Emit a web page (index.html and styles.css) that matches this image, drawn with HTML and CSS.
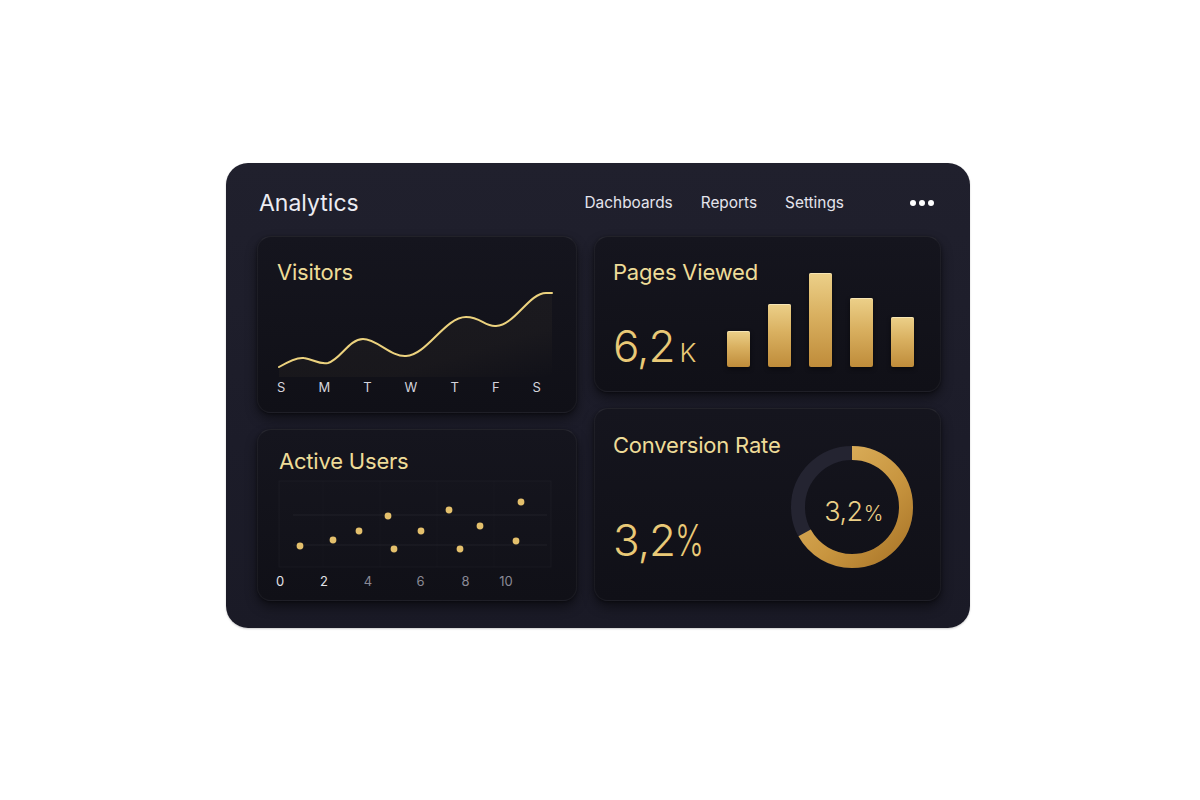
FILE: index.html
```html
<!DOCTYPE html>
<html lang="en">
<head>
<meta charset="utf-8">
<title>Analytics</title>
<link rel="stylesheet" href="styles.css">
</head>
<body>
<div class="panel">
  <header class="header">
    <h1 class="brand">Analytics</h1>
    <nav class="nav">
      <a class="nav-item">Dachboards</a>
      <a class="nav-item">Reports</a>
      <a class="nav-item">Settings</a>
    </nav>
    <div class="more"><span></span><span></span><span></span></div>
  </header>
  <div class="columns">
    <div class="col col-left">
      <section class="card visitors">
        <h2 class="card-title">Visitors</h2>
        <svg class="line-chart" width="320" height="92" viewBox="0 0 320 92">
          <defs>
            <linearGradient id="areaFill" x1="0" y1="0" x2="1" y2="1">
              <stop offset="0" stop-color="#e8c878" stop-opacity="0.035"/>
              <stop offset="0.7" stop-color="#e8c878" stop-opacity="0.035"/>
              <stop offset="1" stop-color="#e8c878" stop-opacity="0.0"/>
            </linearGradient>
          </defs>
          <path d="M22,82 C32,76 40,72 47,73 C56,74 62,80 71,78 C84,74 92,54 106,54 C120,54 134,72 149,71 C170,70 188,32 209,32 C224,32 228,42 239,41 C258,40 272,8 289,8 L295,8 L295,92 L22,92 Z" fill="url(#areaFill)"/>
          <path d="M22,82 C32,76 40,72 47,73 C56,74 62,80 71,78 C84,74 92,54 106,54 C120,54 134,72 149,71 C170,70 188,32 209,32 C224,32 228,42 239,41 C258,40 272,8 289,8 L295,8" fill="none" stroke="#ecd27e" stroke-width="2" stroke-linecap="round"/>
        </svg>
        <div class="days">
          <span>S</span><span>M</span><span>T</span><span>W</span><span>T</span><span>F</span><span>S</span>
        </div>
      </section>
      <section class="card active">
        <h2 class="card-title">Active Users</h2>
        <svg class="scatter" width="319" height="114" viewBox="0 0 319 114">
          <rect x="22" y="5" width="272" height="86" fill="rgba(255,255,255,0.006)" stroke="rgba(255,255,255,0.035)" stroke-width="1"/>
          <g stroke="rgba(255,255,255,0.02)" stroke-width="1">
            <line x1="66" y1="5" x2="66" y2="91"/>
            <line x1="123" y1="5" x2="123" y2="91"/>
            <line x1="180" y1="5" x2="180" y2="91"/>
            <line x1="237" y1="5" x2="237" y2="91"/>
          </g>
          <g stroke="rgba(255,255,255,0.06)" stroke-width="1">
            <line x1="36" y1="39" x2="290" y2="39"/>
            <line x1="36" y1="69" x2="290" y2="69"/>
          </g>
          <g fill="#e4c06c">
            <circle cx="43" cy="70" r="3.4"/>
            <circle cx="76" cy="64" r="3.4"/>
            <circle cx="102" cy="55" r="3.4"/>
            <circle cx="131" cy="40" r="3.4"/>
            <circle cx="137" cy="73" r="3.4"/>
            <circle cx="164" cy="55" r="3.4"/>
            <circle cx="192" cy="34" r="3.4"/>
            <circle cx="203" cy="73" r="3.4"/>
            <circle cx="223" cy="50" r="3.4"/>
            <circle cx="264" cy="26" r="3.4"/>
            <circle cx="259" cy="65" r="3.4"/>
          </g>
          <g class="axis">
            <text x="23" y="110" class="ax-hi" text-anchor="middle">0</text>
            <text x="67" y="110" class="ax-hi" text-anchor="middle">2</text>
            <text x="111" y="110" text-anchor="middle">4</text>
            <text x="163.5" y="110" text-anchor="middle">6</text>
            <text x="208.5" y="110" text-anchor="middle">8</text>
            <text x="249" y="110" text-anchor="middle">10</text>
          </g>
        </svg>
      </section>
    </div>
    <div class="col col-right">
      <section class="card pages">
        <div class="stat">
          <h2 class="card-title">Pages Viewed</h2>
          <div class="big">6,2<span class="unit">K</span></div>
        </div>
        <div class="bars">
          <div class="bar b1"></div>
          <div class="bar b2"></div>
          <div class="bar b3"></div>
          <div class="bar b4"></div>
          <div class="bar b5"></div>
        </div>
      </section>
      <section class="card conversion">
        <div class="stat">
          <h2 class="card-title">Conversion Rate</h2>
          <div class="big big-conv">3,2<span class="pct-big">%</span></div>
        </div>
        <div class="donut">
          <svg width="122" height="122" viewBox="0 0 122 122">
            <defs>
              <linearGradient id="ringGold" x1="1" y1="0" x2="0" y2="1">
                <stop offset="0" stop-color="#e2b865"/>
                <stop offset="0.6" stop-color="#c8953f"/>
                <stop offset="1" stop-color="#a97528"/>
              </linearGradient>
            </defs>
            <circle cx="61" cy="61" r="54" fill="none" stroke="#242431" stroke-width="14"/>
            <circle cx="61" cy="61" r="54" fill="none" stroke="url(#ringGold)" stroke-width="14" stroke-dasharray="227 340" transform="rotate(-90 61 61)"/>
          </svg>
          <div class="donut-label">3,2<span class="pct">%</span></div>
        </div>
      </section>
    </div>
  </div>
</div>
</body>
</html>
```
FILE: styles.css
```css
* { box-sizing: border-box; }
html, body { margin: 0; padding: 0; background: #ffffff; }
body {
  font-family: Inter, "Noto Sans", "DejaVu Sans", sans-serif;
  width: 1200px;
  height: 800px;
  overflow: hidden;
}
.panel {
  margin: 163px 0 0 226px;
  width: 744px;
  height: 465px;
  border-radius: 22px;
  background: linear-gradient(180deg, #20202d 0%, #1c1c29 60%, #1a1a26 100%);
  padding: 0 29px 27px 31px;
  box-shadow: 0 1px 2px rgba(0,0,0,0.2);
}
.header {
  height: 73px;
  display: flex;
  align-items: center;
  padding-top: 6px;
}
.brand {
  margin: 0 0 0 2px;
  font-size: 23px;
  font-weight: 400;
  color: #ececf2;
  flex: 1;
}
.nav {
  display: flex;
  gap: 28px;
  margin-right: 66px;
}
.nav-item {
  font-size: 15.4px;
  color: #e4e4ec;
  text-decoration: none;
}
.more {
  display: flex;
  gap: 3px;
  margin-right: 7px;
  padding-top: 1px;
}
.more span {
  width: 6px;
  height: 6px;
  border-radius: 50%;
  background: #ffffff;
}
.columns {
  display: flex;
  gap: 17px;
}
.col {
  display: flex;
  flex-direction: column;
  gap: 16px;
}
.col-left { width: 320px; }
.col-right { width: 347px; }
.card {
  border-radius: 14px;
  background: linear-gradient(180deg, #15151e 0%, #101017 100%);
  border: 1px solid rgba(255,255,255,0.045);
  border-top-color: rgba(255,255,255,0.08);
  box-shadow: 0 6px 12px rgba(0,0,0,0.45), 0 1px 3px rgba(0,0,0,0.4);
}
.card-title {
  margin: 0;
  font-size: 22px;
  line-height: 26px;
  font-weight: 400;
  color: #eedc98;
  white-space: nowrap;
  letter-spacing: -0.2px;
}
svg { display: block; }

/* Visitors */
.visitors { height: 177px; }
.visitors .card-title { padding: 22px 0 0 19px; }
.line-chart { margin-left: -1px; }
.days {
  display: flex;
  justify-content: space-between;
  width: 264px;
  margin-left: 19px;
  margin-top: 2px;
  font-size: 13px;
  line-height: 16px;
  color: #d4d4dc;
}

/* Active users */
.active { height: 172px; }
.active .card-title { padding: 18px 0 0 21px; }
.scatter { margin-top: 2px; margin-left: -1px; }
.axis text {
  font-family: Inter, "Noto Sans", sans-serif;
  font-size: 13px;
  fill: #8a8a96;
}
.axis text.ax-hi { fill: #e2e2e8; }

/* Stat cards */
.pages, .conversion {
  display: flex;
}
.stat {
  display: flex;
  flex-direction: column;
  flex: 1;
  min-width: 0;
}
.big {
  margin-top: auto;
  font-size: 44px;
  line-height: 44px;
  font-weight: 300;
  color: #e9c977;
  letter-spacing: -1px;
  white-space: nowrap;
}
.unit {
  font-size: 26px;
  margin-left: 5px;
  letter-spacing: 0;
}
.pct-big {
  display: inline-block;
  transform: scaleX(0.7);
  transform-origin: left center;
  margin-right: -12px;
  letter-spacing: 0;
}
.pages {
  height: 156px;
  padding: 0 26px 0 18px;
}
.pages .card-title { padding-top: 22px; }
.pages .big { margin-bottom: 16px; }
.bars {
  flex-shrink: 0;
  align-self: flex-end;
  display: flex;
  align-items: flex-end;
  gap: 18px;
  margin-bottom: 24px;
}
.bar {
  width: 23px;
  border-radius: 2px;
  background: linear-gradient(180deg, #ecd089 0%, #d9b060 45%, #bf8c3a 100%);
  box-shadow: inset 0 1px 0 rgba(255,245,210,0.6), 0 2px 4px rgba(0,0,0,0.5);
}
.b1 { height: 36px; }
.b2 { height: 63px; }
.b3 { height: 94px; }
.b4 { height: 69px; }
.b5 { height: 50px; }

.conversion {
  height: 193px;
  padding: 0 27px 0 18px;
}
.conversion .card-title { padding-top: 23px; }
.conversion .big { margin-bottom: 38px; }
.donut {
  flex-shrink: 0;
  align-self: flex-start;
  margin-top: 37px;
  display: grid;
  width: 122px;
  height: 122px;
}
.donut > * { grid-area: 1 / 1; }
.donut-label {
  align-self: center;
  justify-self: center;
  font-size: 27px;
  font-weight: 300;
  color: #ecd088;
  letter-spacing: -0.5px;
  padding-top: 8px;
  padding-left: 3px;
}
.pct { font-size: 21px; margin-left: 1px; }
```
